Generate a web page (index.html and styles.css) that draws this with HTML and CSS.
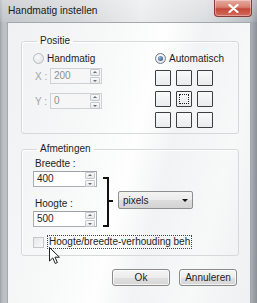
FILE: index.html
```html
<!DOCTYPE html>
<html lang="nl">
<head>
  <meta charset="UTF-8">
  <title>Handmatig instellen</title>
  <link rel="stylesheet" href="styles.css">
</head>
<body>
  <div class="window">
    <div class="titlebar">
      <span class="title">Handmatig instellen</span>
      <span class="close-btn">
        <svg width="11" height="9" viewBox="0 0 11 9"><path d="M1.5 1 L9.5 8 M9.5 1 L1.5 8" stroke="#fff" stroke-width="2.2" stroke-linecap="round"/></svg>
      </span>
    </div>

    <div class="client">
      <!-- Positie -->
      <fieldset class="group group-pos">
        <legend>Positie</legend>
        <div class="pos-cols">
          <div class="pos-manual">
            <label class="radio"><span class="radio-dot"></span>Handmatig</label>
            <div class="coord coord-x">
              <span class="coord-label">X :</span>
              <div class="spin spin-disabled">
                <span class="spin-value">200</span>
                <span class="spin-btns"><i class="up"></i><i class="down"></i></span>
              </div>
            </div>
            <div class="coord coord-y">
              <span class="coord-label">Y :</span>
              <div class="spin spin-disabled">
                <span class="spin-value">0</span>
                <span class="spin-btns"><i class="up"></i><i class="down"></i></span>
              </div>
            </div>
          </div>
          <div class="pos-auto">
            <label class="radio radio-on"><span class="radio-dot"></span>Automatisch</label>
            <div class="anchor-grid">
              <div class="anchor"></div><div class="anchor"></div><div class="anchor"></div>
              <div class="anchor"></div><div class="anchor anchor-focus"></div><div class="anchor"></div>
              <div class="anchor"></div><div class="anchor"></div><div class="anchor"></div>
            </div>
          </div>
        </div>
      </fieldset>

      <!-- Afmetingen -->
      <fieldset class="group group-size">
        <legend>Afmetingen</legend>
        <div class="size-row">
          <div class="size-fields">
            <div class="field-label">Breedte :</div>
            <div class="spin spin-wide">
              <span class="spin-value">400</span>
              <span class="spin-btns"><i class="up"></i><i class="down"></i></span>
            </div>
            <div class="field-label field-label-2">Hoogte :</div>
            <div class="spin spin-wide">
              <span class="spin-value">500</span>
              <span class="spin-btns"><i class="up"></i><i class="down"></i></span>
            </div>
          </div>
          <div class="bracket"></div>
          <div class="select">
            <span>pixels</span>
            <span class="select-arrow"></span>
          </div>
        </div>
        <label class="check">
          <span class="check-box"></span>
          <span class="check-text">Hoogte/breedte-verhouding beh</span>
        </label>
      </fieldset>

      <div class="buttons">
        <button class="btn">Ok</button>
        <button class="btn">Annuleren</button>
      </div>
    </div>

    <svg class="cursor" width="12" height="18" viewBox="0 0 12 18">
      <path d="M0.5 0.5 L0.5 14 L3.8 10.9 L6.2 16.5 L8.4 15.5 L6 10.2 L10.4 10.2 Z" fill="#fff" stroke="#222" stroke-width="1"/>
    </svg>
  </div>
</body>
</html>
```

FILE: styles.css
```css
/* General */
body {
  margin: 0;
  font-family: "Liberation Sans", Arial, sans-serif;
  font-size: 10px;
  color: #1e1e1e;
}

.window {
  position: relative;
  width: 257px;
  height: 303px;
  overflow: hidden;
  background: linear-gradient(90deg, #9ea3a8 0, #bcc0c4 3px, #cfd2d5 30%, #e9eaeb 55%, #d6d9dc 80%, #b3b8bd 97%, #8a9096 100%);
}

/* Title bar */
.titlebar {
  height: 22px;
  display: flex;
  align-items: flex-start;
  justify-content: space-between;
  background: linear-gradient(180deg, rgba(255,255,255,0.35), rgba(255,255,255,0.1));
}

.title {
  margin: 5px 0 0 8px;
  line-height: 12px;
  font-size: 10.2px;
  color: #1b1b1b;
}

.close-btn {
  width: 38px;
  height: 17px;
  margin-right: 5px;
  display: flex;
  align-items: center;
  justify-content: center;
  border: 1px solid #8b3a35;
  border-top: none;
  border-radius: 0 0 4px 4px;
  box-sizing: border-box;
  background: linear-gradient(180deg, #e6aaa0 0%, #d8806f 45%, #c4493a 55%, #d46a5c 100%);
  box-shadow: inset 0 0 0 1px rgba(255,255,255,0.35);
}

/* Client area */
.client {
  margin-left: 7px;
  width: 244px;
  height: 290px;
  box-sizing: border-box;
  padding-top: 11px;
  border: 1px solid #a3a8ad;
  background: linear-gradient(105deg, #eff1f2 0%, #f8f9f9 35%, #fefefe 50%, #f2f3f4 62%, #f7f8f8 80%, #eef0f1 100%);
}

.group {
  margin: 0 11px 0 13px;
  padding: 0 11px;
  border: 1px solid #d6d9dc;
  border-radius: 3px;
  box-shadow: inset 1px 1px 0 #fff;
}

.group legend {
  margin-left: 4px;
  padding: 0 3px;
  line-height: 14px;
  font-size: 10px;
  color: #1e1e1e;
}

/* Positie */
.group-pos {
  height: 95px;
  padding-top: 3px;
}

.pos-cols {
  display: flex;
}

.pos-manual {
  width: 122px;
}

.radio {
  display: flex;
  align-items: center;
  height: 14px;
}

.radio-dot {
  position: relative;
  width: 9px;
  height: 9px;
  margin-right: 3px;
  border: 1px solid #b8bcc0;
  border-radius: 50%;
  background: radial-gradient(circle at 40% 35%, #fafafa, #dcdfe2);
}

.radio-on .radio-dot {
  border-color: #6f7a85;
  background: radial-gradient(circle at 40% 35%, #fff, #d8dde2);
}

.radio-on .radio-dot::after {
  content: "";
  position: absolute;
  left: 2px;
  top: 2px;
  width: 5px;
  height: 5px;
  border-radius: 50%;
  background: radial-gradient(circle at 35% 35%, #8fb6d8, #2a4a6e);
}

.coord {
  display: flex;
  align-items: center;
}

.coord-x {
  margin-top: 3px;
}

.coord-y {
  margin-top: 9px;
}

.coord-label {
  width: 15px;
  margin-left: 2px;
  color: #a2a5a8;
}

/* Spin boxes */
.spin {
  display: flex;
  align-items: center;
  justify-content: space-between;
  width: 52px;
  height: 16px;
  box-sizing: border-box;
  border: 1px solid #abadb3;
  border-top-color: #9ea1a7;
  background: #fff;
}

.spin-wide {
  width: 64px;
}

.spin-value {
  padding-left: 3px;
  line-height: 14px;
}

.spin-disabled {
  border-color: #cfd1d4;
  background: #f6f6f6;
}

.spin-disabled .spin-value {
  color: #8d9094;
}

.spin-btns {
  display: flex;
  flex-direction: column;
  gap: 1px;
  margin-right: 1px;
}

.spin-btns i {
  position: relative;
  width: 8px;
  height: 5px;
  border: 1px solid #c6c9cc;
  border-radius: 1px;
  background: linear-gradient(#fbfbfb, #e6e8ea);
}

.spin-btns i::after {
  content: "";
  position: absolute;
  left: 2px;
  border-left: 2px solid transparent;
  border-right: 2px solid transparent;
}

.spin-btns .up::after {
  top: 1px;
  border-bottom: 2px solid #6b6f74;
}

.spin-btns .down::after {
  top: 2px;
  border-top: 2px solid #6b6f74;
}

/* Anchor grid */
.anchor-grid {
  display: grid;
  grid-template-columns: 16px 16px 16px;
  grid-template-rows: 16px 16px 16px;
  gap: 5px;
  justify-content: start;
  margin-top: 5px;
}

.anchor {
  position: relative;
  box-sizing: border-box;
  border: 1px solid #3c3f42;
  border-radius: 1px;
  background: linear-gradient(#fafafa, #e9ebec);
}

.anchor-focus::after {
  content: "";
  position: absolute;
  left: 2px;
  top: 2px;
  right: 2px;
  bottom: 2px;
  border: 1px dotted #222;
}

/* Afmetingen */
.group-size {
  margin-top: 8px;
  padding-top: 2px;
  padding-bottom: 6px;
}

.size-row {
  display: flex;
}

.field-label {
  height: 12px;
  margin: 0 0 1px 2px;
  line-height: 12px;
}

.field-label-2 {
  margin-top: 11px;
}

.bracket {
  position: relative;
  align-self: flex-end;
  width: 4px;
  height: 46px;
  margin-left: 6px;
  border: 2px solid #111;
  border-left: none;
}

.bracket::after {
  content: "";
  position: absolute;
  right: -6px;
  top: 21px;
  width: 4px;
  height: 2px;
  background: #111;
}

.select {
  align-self: flex-end;
  display: flex;
  align-items: center;
  justify-content: space-between;
  width: 75px;
  height: 18px;
  margin: 0 0 18px 9px;
  padding: 0 4px;
  box-sizing: border-box;
  border: 1px solid #8e8f8f;
  border-radius: 2px;
  background: linear-gradient(#f3f3f3 0%, #ebebeb 50%, #dddddd 51%, #d3d3d3 100%);
}

.select-arrow {
  border-left: 3px solid transparent;
  border-right: 3px solid transparent;
  border-top: 3px solid #111;
}

.check {
  display: flex;
  align-items: center;
  height: 14px;
  margin-top: 8px;
}

.check-box {
  width: 9px;
  height: 9px;
  margin-right: 3px;
  border: 1px solid #c5c8cb;
  background: linear-gradient(135deg, #e4e6e8, #fafafa);
}

.check-text {
  padding: 0 1px;
  line-height: 12px;
  white-space: nowrap;
  border: 1px dotted #444;
}

/* Buttons */
.buttons {
  display: flex;
  justify-content: flex-end;
  gap: 9px;
  margin: 13px 13px 0 0;
}

.btn {
  width: 58px;
  height: 17px;
  padding: 0;
  border: 1px solid #8a8a8a;
  border-radius: 3px;
  background: linear-gradient(#f5f5f5 0%, #ececec 50%, #e0e0e0 51%, #d6d6d6 100%);
  box-shadow: inset 0 0 0 1px rgba(255,255,255,0.7);
  font-family: inherit;
  font-size: 10px;
  color: #1e1e1e;
}

/* Mouse pointer over the dialog */
.cursor {
  position: absolute;
  left: 49px;
  top: 247px;
}
```
